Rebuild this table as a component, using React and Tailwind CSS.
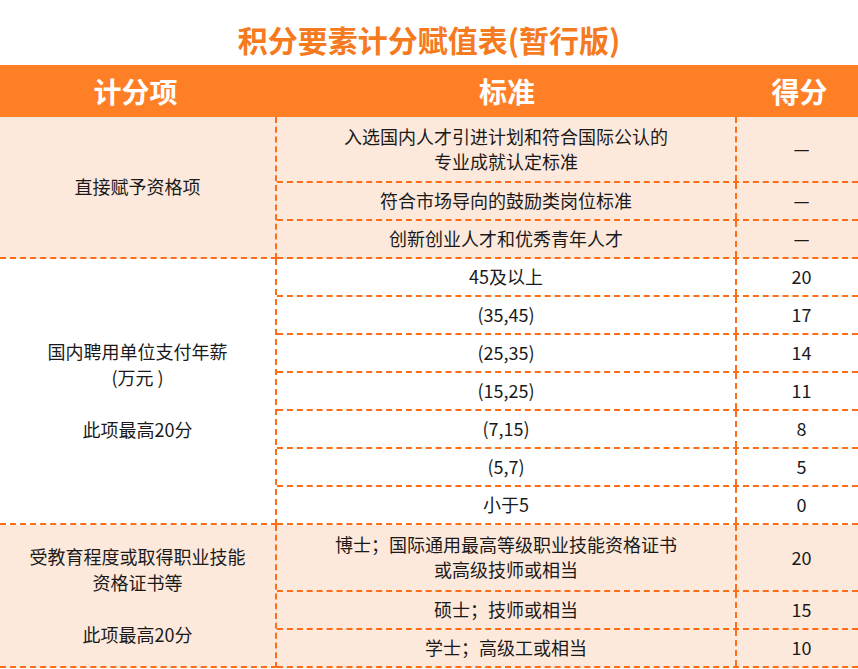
import React from "react";

const FONT = { fontFamily: '"Microsoft YaHei", "Noto Sans CJK SC", "Noto Sans", sans-serif' };

// each group: left label + its rows (height includes the row's bottom border)
const groups = [
  {
    label: ["直接赋予资格项"],
    shaded: true,
    rows: [
      { std: ["入选国内人才引进计划和符合国际公认的", "专业成就认定标准"], score: "—", h: "h-[66px]" },
      { std: ["符合市场导向的鼓励类岗位标准"], score: "—", h: "h-[38px]" },
      { std: ["创新创业人才和优秀青年人才"], score: "—", h: "h-[38px]" },
    ],
  },
  {
    label: ["国内聘用单位支付年薪", "(万元 )", "", "此项最高20分"],
    shaded: false,
    rows: [
      { std: ["45及以上"], score: "20", h: "h-[38px]" },
      { std: ["(35,45)"], score: "17", h: "h-[38px]" },
      { std: ["(25,35)"], score: "14", h: "h-[38px]" },
      { std: ["(15,25)"], score: "11", h: "h-[38px]" },
      { std: ["(7,15)"], score: "8", h: "h-[38px]" },
      { std: ["(5,7)"], score: "5", h: "h-[38px]" },
      { std: ["小于5"], score: "0", h: "h-[38px]" },
    ],
  },
  {
    label: ["受教育程度或取得职业技能", "资格证书等", "", "此项最高20分"],
    shaded: true,
    rows: [
      { std: ["博士；国际通用最高等级职业技能资格证书", "或高级技师或相当"], score: "20", h: "h-[67px]" },
      { std: ["硕士；技师或相当"], score: "15", h: "h-[38px]" },
      { std: ["学士；高级工或相当"], score: "10", h: "h-[38px]" },
    ],
  },
];

const dash = "border-dashed border-[#ff6d17]";

function Group({ group }) {
  return (
    <div className={"flex " + (group.shaded ? "bg-[#fde9dc]" : "bg-white")}>
      <div className={"w-[277px] shrink-0 flex items-center justify-center border-r-2 border-b-2 leading-[26px] pb-[2px] " + dash}>
        <div className="text-center">
          {group.label.map((l, i) => (
            <div key={i} className="min-h-[26px]">{l}</div>
          ))}
        </div>
      </div>
      <div className="flex-1 flex flex-col">
        {group.rows.map((row, i) => (
          <div key={i} className={"flex border-b-2 " + dash + " " + row.h}>
            <div className={"flex-1 flex items-center justify-center border-r-2 leading-[25px] pb-[1px] " + dash}>
              <div className="text-center">
                {row.std.map((l, j) => (
                  <div key={j}>{l}</div>
                ))}
              </div>
            </div>
            <div className="w-[121px] shrink-0 flex items-center justify-center pb-[1px] pl-[8px]">{row.score}</div>
          </div>
        ))}
      </div>
    </div>
  );
}

export default function App() {
  return (
    <div className="w-[858px] h-[669px] overflow-hidden bg-white text-[#1a1a1a] text-[18px]" style={FONT}>
      <div className="h-[65px] flex items-center justify-center pt-[12px]">
        <h1 className="text-[30px] font-bold text-[#f57a20] leading-[38px]">积分要素计分赋值表(暂行版)</h1>
      </div>

      <div className="h-[52px] flex bg-[#ff7f27] text-white text-[28px] font-bold">
        <div className="w-[277px] flex items-center justify-center pr-[6px]">计分项</div>
        <div className="flex-1 flex items-center justify-center">标准</div>
        <div className="w-[121px] flex items-center justify-center pl-[4px]">得分</div>
      </div>

      {groups.map((g, i) => (
        <Group key={i} group={g} />
      ))}
    </div>
  );
}
